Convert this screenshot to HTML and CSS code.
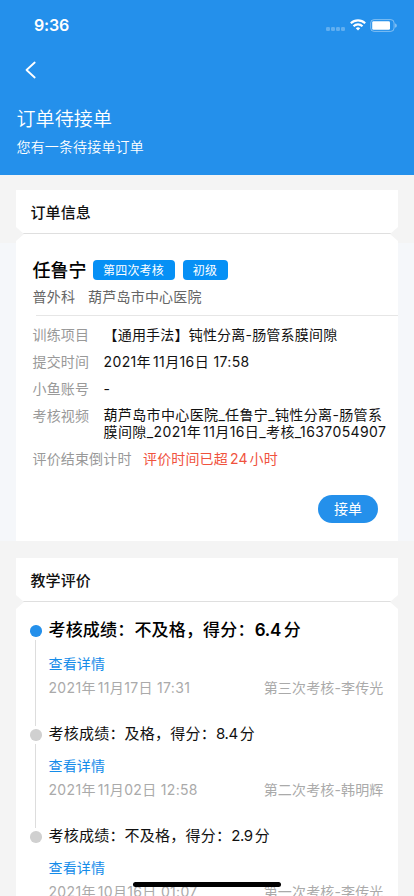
FILE: index.html
```html
<!DOCTYPE html>
<html lang="zh-CN">
<head>
<meta charset="utf-8">
<meta name="viewport" content="width=device-width, initial-scale=1">
<title>订单待接单</title>
<link rel="stylesheet" href="styles.css">
</head>
<body>
<div class="screen">
  <header class="header">
    <div class="status">
      <span class="time">9:36</span>
      <svg class="signal" width="20" height="4" viewBox="0 0 20 4" fill="#fff" fill-opacity=".28"><rect x="0" width="4" height="4" rx="1.3"/><rect x="5" width="4" height="4" rx="1.3"/><rect x="10" width="4" height="4" rx="1.3"/><rect x="15" width="4" height="4" rx="1.3"/></svg>
      <svg class="wifi" width="16" height="12" viewBox="0 0 16 12" fill="none" stroke="#fff" stroke-width="2.1"><path d="M.8 4.300a10.300 10.300 0 0 1 14.400 0"/><path d="M3.500 7.200a6.400 6.400 0 0 1 9 0"/><path d="M5.800 9.300a3.300 3.300 0 0 1 4.400 0L8 11.600z" fill="#fff" stroke="none"/></svg>
      <svg class="battery" width="28" height="13" viewBox="0 0 28 13"><rect x=".7" y=".6" width="23.400" height="11.800" rx="3.400" fill="none" stroke="#fff" stroke-opacity=".42"/><rect x="2.200" y="2.300" width="17.800" height="8.400" rx="1.300" fill="#fff"/><path d="M25.200 4.400c2 .5 2 3.700 0 4.200z" fill="#fff" fill-opacity=".5"/></svg>
    </div>
    <svg class="back" width="12" height="18" viewBox="0 0 12 18" fill="none" stroke="#fff" stroke-width="1.8" stroke-linecap="round" stroke-linejoin="round"><path d="M9.700 1.500 1.500 9l8.200 7.500"/></svg>
    <h1 class="title">订单待接单</h1>
    <p class="subtitle">您有一条待接单订单</p>
  </header>

  <section class="card-wrap order">
    <h2 class="card-title">订单信息</h2>
    <div class="card-body order-body">
      <div class="name-row"><span class="name">任鲁宁</span><span class="tag">第四次考核</span><span class="tag level">初级</span></div>
      <div class="hospital"><span>普外科</span><span>葫芦岛市中心医院</span></div>
      <dl class="fields">
        <div class="field"><dt>训练项目</dt><dd class="bracket">【通用手法】钝性分离-肠管系膜间隙</dd></div>
        <div class="field"><dt>提交时间</dt><dd class="submitted">2021年<i></i>11月16日 17:58</dd></div>
        <div class="field"><dt>小鱼账号</dt><dd>-</dd></div>
        <div class="field video"><dt>考核视频</dt><dd><span class="v1">葫芦岛市中心医院_任鲁宁_钝性分离-肠管系</span><br><span class="v2">膜间隙_2021年<i></i>11月16日_考核_1637054907</span></dd></div>
        <div class="field"><dt class="wide">评价结束倒计时</dt><dd class="late">评价时间已超<i></i>24<i></i>小时</dd></div>
      </dl>
      <button class="accept">接单</button>
    </div>
  </section>

  <section class="card-wrap review">
    <h2 class="card-title">教学评价</h2>
    <div class="card-body">
      <ol class="timeline">
        <li class="item current">
          <h3>考核成绩：不及格，得分：<span class="score">6.4</span>分</h3>
          <a class="detail">查看详情</a>
          <div class="meta"><span class="date">2021年<i></i>11月17日 17:31</span><span>第三次考核-李传光</span></div>
        </li>
        <li class="item">
          <h3>考核成绩：及格，得分：<span class="score">8.4</span>分</h3>
          <a class="detail">查看详情</a>
          <div class="meta"><span class="date">2021年<i></i>11月02日 12:58</span><span>第二次考核-韩明辉</span></div>
        </li>
        <li class="item">
          <h3>考核成绩：不及格，得分：<span class="score">2.9</span>分</h3>
          <a class="detail">查看详情</a>
          <div class="meta"><span class="date">2021年<i></i>10月16日 01:07</span><span>第一次考核-李传光</span></div>
        </li>
      </ol>
    </div>
  </section>
  <div class="home-bar"></div>
</div>
</body>
</html>
```
FILE: styles.css
```css
* { box-sizing: border-box; margin: 0; padding: 0; }
html, body { height: 896px; overflow: hidden; }
body {
  font-family: Inter, "Noto Sans CJK SC", sans-serif;
  font-size: 14px;
  letter-spacing: .15px;
  color: #111;
  background: #f4f4f4;
}
i { display: inline-block; width: 2px; }
.screen { position: relative; height: 896px; overflow: hidden; }

.header { height: 175px; background: #2490eb; color: #fff; }
.status { display: flex; align-items: center; height: 50px; padding: 0 16px 0 34px; }
.time { flex: 1; font-size: 16px; font-weight: 600; letter-spacing: -.15px; }
.signal { margin: 8px 4px 0 0; }
.wifi { margin-right: 4px; }
.back { display: block; margin: 11px 0 0 25px; }
.title { margin: 27px 0 0 16.500px; font-size: 19px; line-height: 28px; font-weight: 350; letter-spacing: .1px; }
.subtitle { margin: 3px 0 0 16.500px; line-height: 20px; font-weight: 350; }

.order { padding: 15px 16px 0; background: linear-gradient(#f4f4f4 68px, #f5f7fa 68px); }
.review { padding: 17px 16px 0; }
.card-title {
  height: 44px;
  padding-left: 14.500px;
  font-size: 15px;
  line-height: 45px;
  font-weight: 500;
  letter-spacing: .1px;
  background: linear-gradient(#fff 43px, #dfdfdf 43px);
  clip-path: polygon(0 0, 100% 0, 100% 37px, calc(100% - 8px) 100%, 8px 100%, 0 37px);
}
.card-body {
  background: #fff;
  clip-path: polygon(8px 0, calc(100% - 8px) 0, 100% 7px, 100% 100%, 0 100%, 0 7px);
}
.order-body { height: 307px; padding: 23px 0 0 16.500px; }
.name-row { display: flex; align-items: center; height: 26px; }
.name { width: 60px; font-size: 18px; line-height: 24px; margin-top: 1px; font-weight: 500; letter-spacing: 0; color: #000; }
.tag {
  width: 82px; height: 20px; border-radius: 4px;
  background: #0690f5; color: #fff;
  font-size: 12px; line-height: 21px; text-align: center; letter-spacing: .15px;
}
.level { width: 45px; margin-left: 8px; }
.hospital { display: flex; gap: 13px; margin-top: 4px; line-height: 20px; height: 20px; color: #666; letter-spacing: .2px; }
.fields { margin: 8px 0 0 3px; padding-top: 9px; border-top: 1px solid #e6e6e6; }
.field { display: flex; margin: 0 0 7px -3px; line-height: 20px; }
dt { width: 71px; flex: none; color: #999; }
dt.wide { width: 110.500px; }
dd { white-space: nowrap; }
.bracket { letter-spacing: .2px; }
.submitted { letter-spacing: .38px; }
.v1 { letter-spacing: .36px; }
.v2 { letter-spacing: .4px; }
.video dd { line-height: 17px; }
.video { height: 36px; }
.late { color: #f0523d; }
.accept {
  display: block; width: 60px; height: 28px; margin: 26px 20px 0 auto;
  border: 0; border-radius: 14px; background: #2490eb; color: #fff;
  font: inherit; line-height: 28px;
}

.timeline { list-style: none; padding: 16px 14.500px 0 14px; }
.item { position: relative; height: 102px; padding-left: 18.500px; }
.item::before {
  content: ""; position: absolute; left: 0; top: 7px;
  width: 11.500px; height: 11.500px; border-radius: 50%; background: #d0d0d0;
}
.item::after {
  content: ""; position: absolute; left: 5px; top: 22px; bottom: -4px;
  width: 1.300px; background: #ddd;
}
.item:last-child::after { display: none; }
h3 { height: 24px; line-height: 24px; font-size: 15px; font-weight: 400; letter-spacing: .22px; }
.detail { display: block; margin-top: 10px; line-height: 20px; color: #148ce9; }
.meta { display: flex; justify-content: space-between; margin-top: 4px; line-height: 20px; color: #aaa; }
.meta .date { letter-spacing: .33px; }
.score { margin-right: 2px; letter-spacing: -.4px; }
.current { height: 104px; }
.current::before { background: #2490eb; }
.current h3 { font-size: 17px; font-weight: 500; letter-spacing: .18px; color: #000; }
.current .detail { margin-top: 12px; }
.current .score { font-weight: 600; letter-spacing: -.2px; margin-right: 2.500px; }
.home-bar {
  position: absolute; left: 133px; top: 882px; width: 148px; height: 5px;
  border-radius: 3px; background: #000;
}
```
